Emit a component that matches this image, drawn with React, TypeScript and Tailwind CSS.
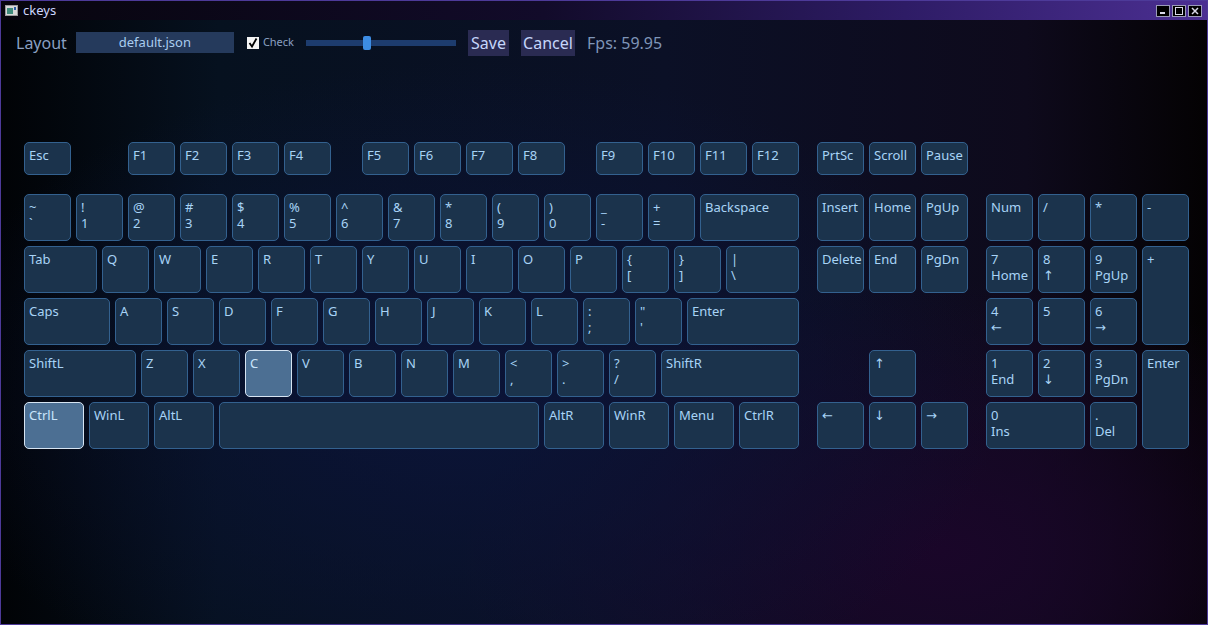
import React from "react";

type KeyDef = { t: string; b?: string; w?: number; on?: boolean };

const W: Record<number, string> = {
    21: "w-[21px]",
    47: "w-[47px]",
    60: "w-[60px]",
    73: "w-[73px]",
    86: "w-[86px]",
    99: "w-[99px]",
    112: "w-[112px]",
    138: "w-[138px]",
    320: "w-[320px]",
};

const k = (t: string, b?: string, w = 47, on = false): KeyDef => ({ t, b, w, on });

const fRow: (KeyDef | number)[] = [
    k("Esc"), 47,
    k("F1"), k("F2"), k("F3"), k("F4"), 21,
    k("F5"), k("F6"), k("F7"), k("F8"), 21,
    k("F9"), k("F10"), k("F11"), k("F12"),
];

const mainRows: KeyDef[][] = [
    [
        k("~", "`"), k("!", "1"), k("@", "2"), k("#", "3"), k("$", "4"), k("%", "5"), k("^", "6"),
        k("&", "7"), k("*", "8"), k("(", "9"), k(")", "0"), k("_", "-"), k("+", "="), k("Backspace", "", 99),
    ],
    [
        k("Tab", "", 73), k("Q"), k("W"), k("E"), k("R"), k("T"), k("Y"), k("U"), k("I"), k("O"), k("P"),
        k("{", "["), k("}", "]"), k("|", "\\", 73),
    ],
    [
        k("Caps", "", 86), k("A"), k("S"), k("D"), k("F"), k("G"), k("H"), k("J"), k("K"), k("L"),
        k(":", ";"), k("\"", "'"), k("Enter", "", 112),
    ],
    [
        k("ShiftL", "", 112), k("Z"), k("X"), k("C", "", 47, true), k("V"), k("B"), k("N"), k("M"),
        k("<", ","), k(">", "."), k("?", "/"), k("ShiftR", "", 138),
    ],
    [
        k("CtrlL", "", 60, true), k("WinL", "", 60), k("AltL", "", 60), k("", "", 320),
        k("AltR", "", 60), k("WinR", "", 60), k("Menu", "", 60), k("CtrlR", "", 60),
    ],
];

const navRows: (KeyDef | null)[][] = [
    [k("Insert"), k("Home"), k("PgUp")],
    [k("Delete"), k("End"), k("PgDn")],
    [],
    [null, k("↑")],
    [k("←"), k("↓"), k("→")],
];

const numpad: { key: KeyDef; span?: string }[] = [
    { key: k("Num") }, { key: k("/") }, { key: k("*") }, { key: k("-") },
    { key: k("7", "Home") }, { key: k("8", "↑") }, { key: k("9", "PgUp") }, { key: k("+"), span: "row-span-2" },
    { key: k("4", "←") }, { key: k("5") }, { key: k("6", "→") },
    { key: k("1", "End") }, { key: k("2", "↓") }, { key: k("3", "PgDn") }, { key: k("Enter"), span: "row-span-2" },
    { key: k("0", "Ins"), span: "col-span-2" }, { key: k(".", "Del") },
];

const Key = ({ d, size }: { d: KeyDef; size: string }) => (
    <div
        className={`${size} shrink-0 rounded-[5px] border pl-[4px] pt-[4px] text-[13px] leading-[16px] whitespace-pre ${
            d.on ? "bg-[#4c6f93] border-[#d6e4f2] text-[#c9e4fb]" : "bg-[#1b334c] border-[#33618f] text-[#a8d3f6]"
        }`}
    >
        <div>{d.t}</div>
        {d.b ? <div>{d.b}</div> : null}
    </div>
);

const TitleBtn = ({ children }: { children: React.ReactNode }) => (
    <div className="w-[14px] h-[12px] bg-black border border-[#9a9ab8] flex items-center justify-center">
        <svg width="10" height="8" viewBox="0 0 10 8">{children}</svg>
    </div>
);

export default function App() {
    return (
        <div
            className="w-[1208px] h-[625px] overflow-hidden flex flex-col border border-[#4d3a99] bg-[#04060c] text-[#a6d1f4]"
            style={{ fontFamily: "'Noto Sans', 'DejaVu Sans', sans-serif" }}
        >
            {/* title bar */}
            <div className="h-[19px] shrink-0 flex items-center pl-[4px] pr-[5px] bg-[linear-gradient(to_right,#07050d,#120b2a_45%,#2e1c66_75%,#4b2f92)]">
                <svg width="13" height="11" viewBox="0 0 13 11" className="mr-[5px]">
                    <rect x="0.5" y="0.5" width="12" height="10" fill="#d8d8d8" stroke="#9a9a9a" />
                    <rect x="2" y="3" width="6" height="6" fill="#3f8c7c" />
                    <rect x="9" y="2" width="2" height="3" fill="#2c5fa8" />
                </svg>
                <span className="text-[13px] text-[#cfd6ff] leading-none">ckeys</span>
                <div className="ml-auto flex gap-[2px]">
                    <TitleBtn>
                        <rect x="2" y="5" width="5" height="2" fill="#d8d8e8" />
                    </TitleBtn>
                    <TitleBtn>
                        <rect x="1.5" y="0.5" width="7" height="7" fill="none" stroke="#d8d8e8" />
                    </TitleBtn>
                    <TitleBtn>
                        <path d="M2 1 L8 7 M8 1 L2 7" stroke="#d8d8e8" strokeWidth="1.5" />
                    </TitleBtn>
                </div>
            </div>

            {/* client area */}
            <div className="flex-1 flex flex-col bg-[image:radial-gradient(ellipse_45%_55%_at_38%_62%,#0b1438_0%,transparent_100%),radial-gradient(ellipse_40%_45%_at_78%_88%,#1a0629_0%,transparent_100%),linear-gradient(to_right,#010306,#06111f_18%,#0b1026_55%,#0e0a1c_85%,#040203)]">
                {/* controls */}
                <div className="mt-[9px] h-[27px] flex items-center">
                    <span className="ml-[15px] text-[16px] text-[#8aa0c2]">Layout</span>
                    <div className="ml-[9px] w-[158px] h-[21px] bg-[#253a5c] flex items-center justify-center text-[13px] text-[#a9cdf0]">
                        default.json
                    </div>
                    <svg width="12" height="12" viewBox="0 0 12 12" className="ml-[13px]">
                        <rect x="0" y="0" width="12" height="12" fill="#f4f4f4" />
                        <path d="M2.5 6 L5 9.5 L9.5 1.5" fill="none" stroke="#000" strokeWidth="1.8" />
                    </svg>
                    <span className="ml-[4px] text-[11px] text-[#8aa0c2]">Check</span>
                    <div className="ml-[12px] w-[150px] h-[6px] bg-[#1d3c6e] relative">
                        <div className="absolute left-[57px] top-[-4px] w-[8px] h-[14px] rounded-[2px] bg-[#3d8de4]" />
                    </div>
                    <div className="ml-[12px] w-[41px] h-[26px] bg-[#2a2b52] flex items-center justify-center text-[16px] text-[#c5d6fb]">
                        Save
                    </div>
                    <div className="ml-[12px] w-[54px] h-[26px] bg-[#2a2b52] flex items-center justify-center text-[16px] text-[#c5d6fb]">
                        Cancel
                    </div>
                    <span className="ml-[12px] text-[16px] text-[#7f95b8]">Fps: 59.95</span>
                </div>

                {/* keyboard */}
                <div className="mt-[86px] ml-[23px] flex flex-col">
                    <div className="flex">
                        <div className="w-[775px] flex gap-[5px]">
                            {fRow.map((d, i) =>
                                typeof d === "number" ? (
                                    <div key={i} className={`${W[d]} shrink-0`} />
                                ) : (
                                    <Key key={i} d={d} size={`${W[d.w ?? 47]} h-[33px]`} />
                                )
                            )}
                        </div>
                        <div className="ml-[18px] flex gap-[5px]">
                            <Key d={k("PrtSc")} size="w-[47px] h-[33px]" />
                            <Key d={k("Scroll")} size="w-[47px] h-[33px]" />
                            <Key d={k("Pause")} size="w-[47px] h-[33px]" />
                        </div>
                    </div>

                    <div className="mt-[19px] flex">
                        <div className="w-[775px] flex flex-col gap-[5px]">
                            {mainRows.map((row, r) => (
                                <div key={r} className="flex gap-[5px]">
                                    {row.map((d, i) => (
                                        <Key key={i} d={d} size={`${W[d.w ?? 47]} h-[47px]`} />
                                    ))}
                                </div>
                            ))}
                        </div>
                        <div className="ml-[18px] w-[151px] flex flex-col gap-[5px]">
                            {navRows.map((row, r) => (
                                <div key={r} className="h-[47px] flex gap-[5px]">
                                    {row.map((d, i) =>
                                        d ? (
                                            <Key key={i} d={d} size="w-[47px] h-[47px]" />
                                        ) : (
                                            <div key={i} className="w-[47px] shrink-0" />
                                        )
                                    )}
                                </div>
                            ))}
                        </div>
                        <div className="ml-[18px] grid grid-cols-[repeat(4,47px)] grid-rows-[repeat(5,47px)] gap-[5px]">
                            {numpad.map((c, i) => (
                                <div key={i} className={c.span ?? ""}>
                                    <Key d={c.key} size="w-full h-full" />
                                </div>
                            ))}
                        </div>
                    </div>
                </div>
            </div>
        </div>
    );
}
